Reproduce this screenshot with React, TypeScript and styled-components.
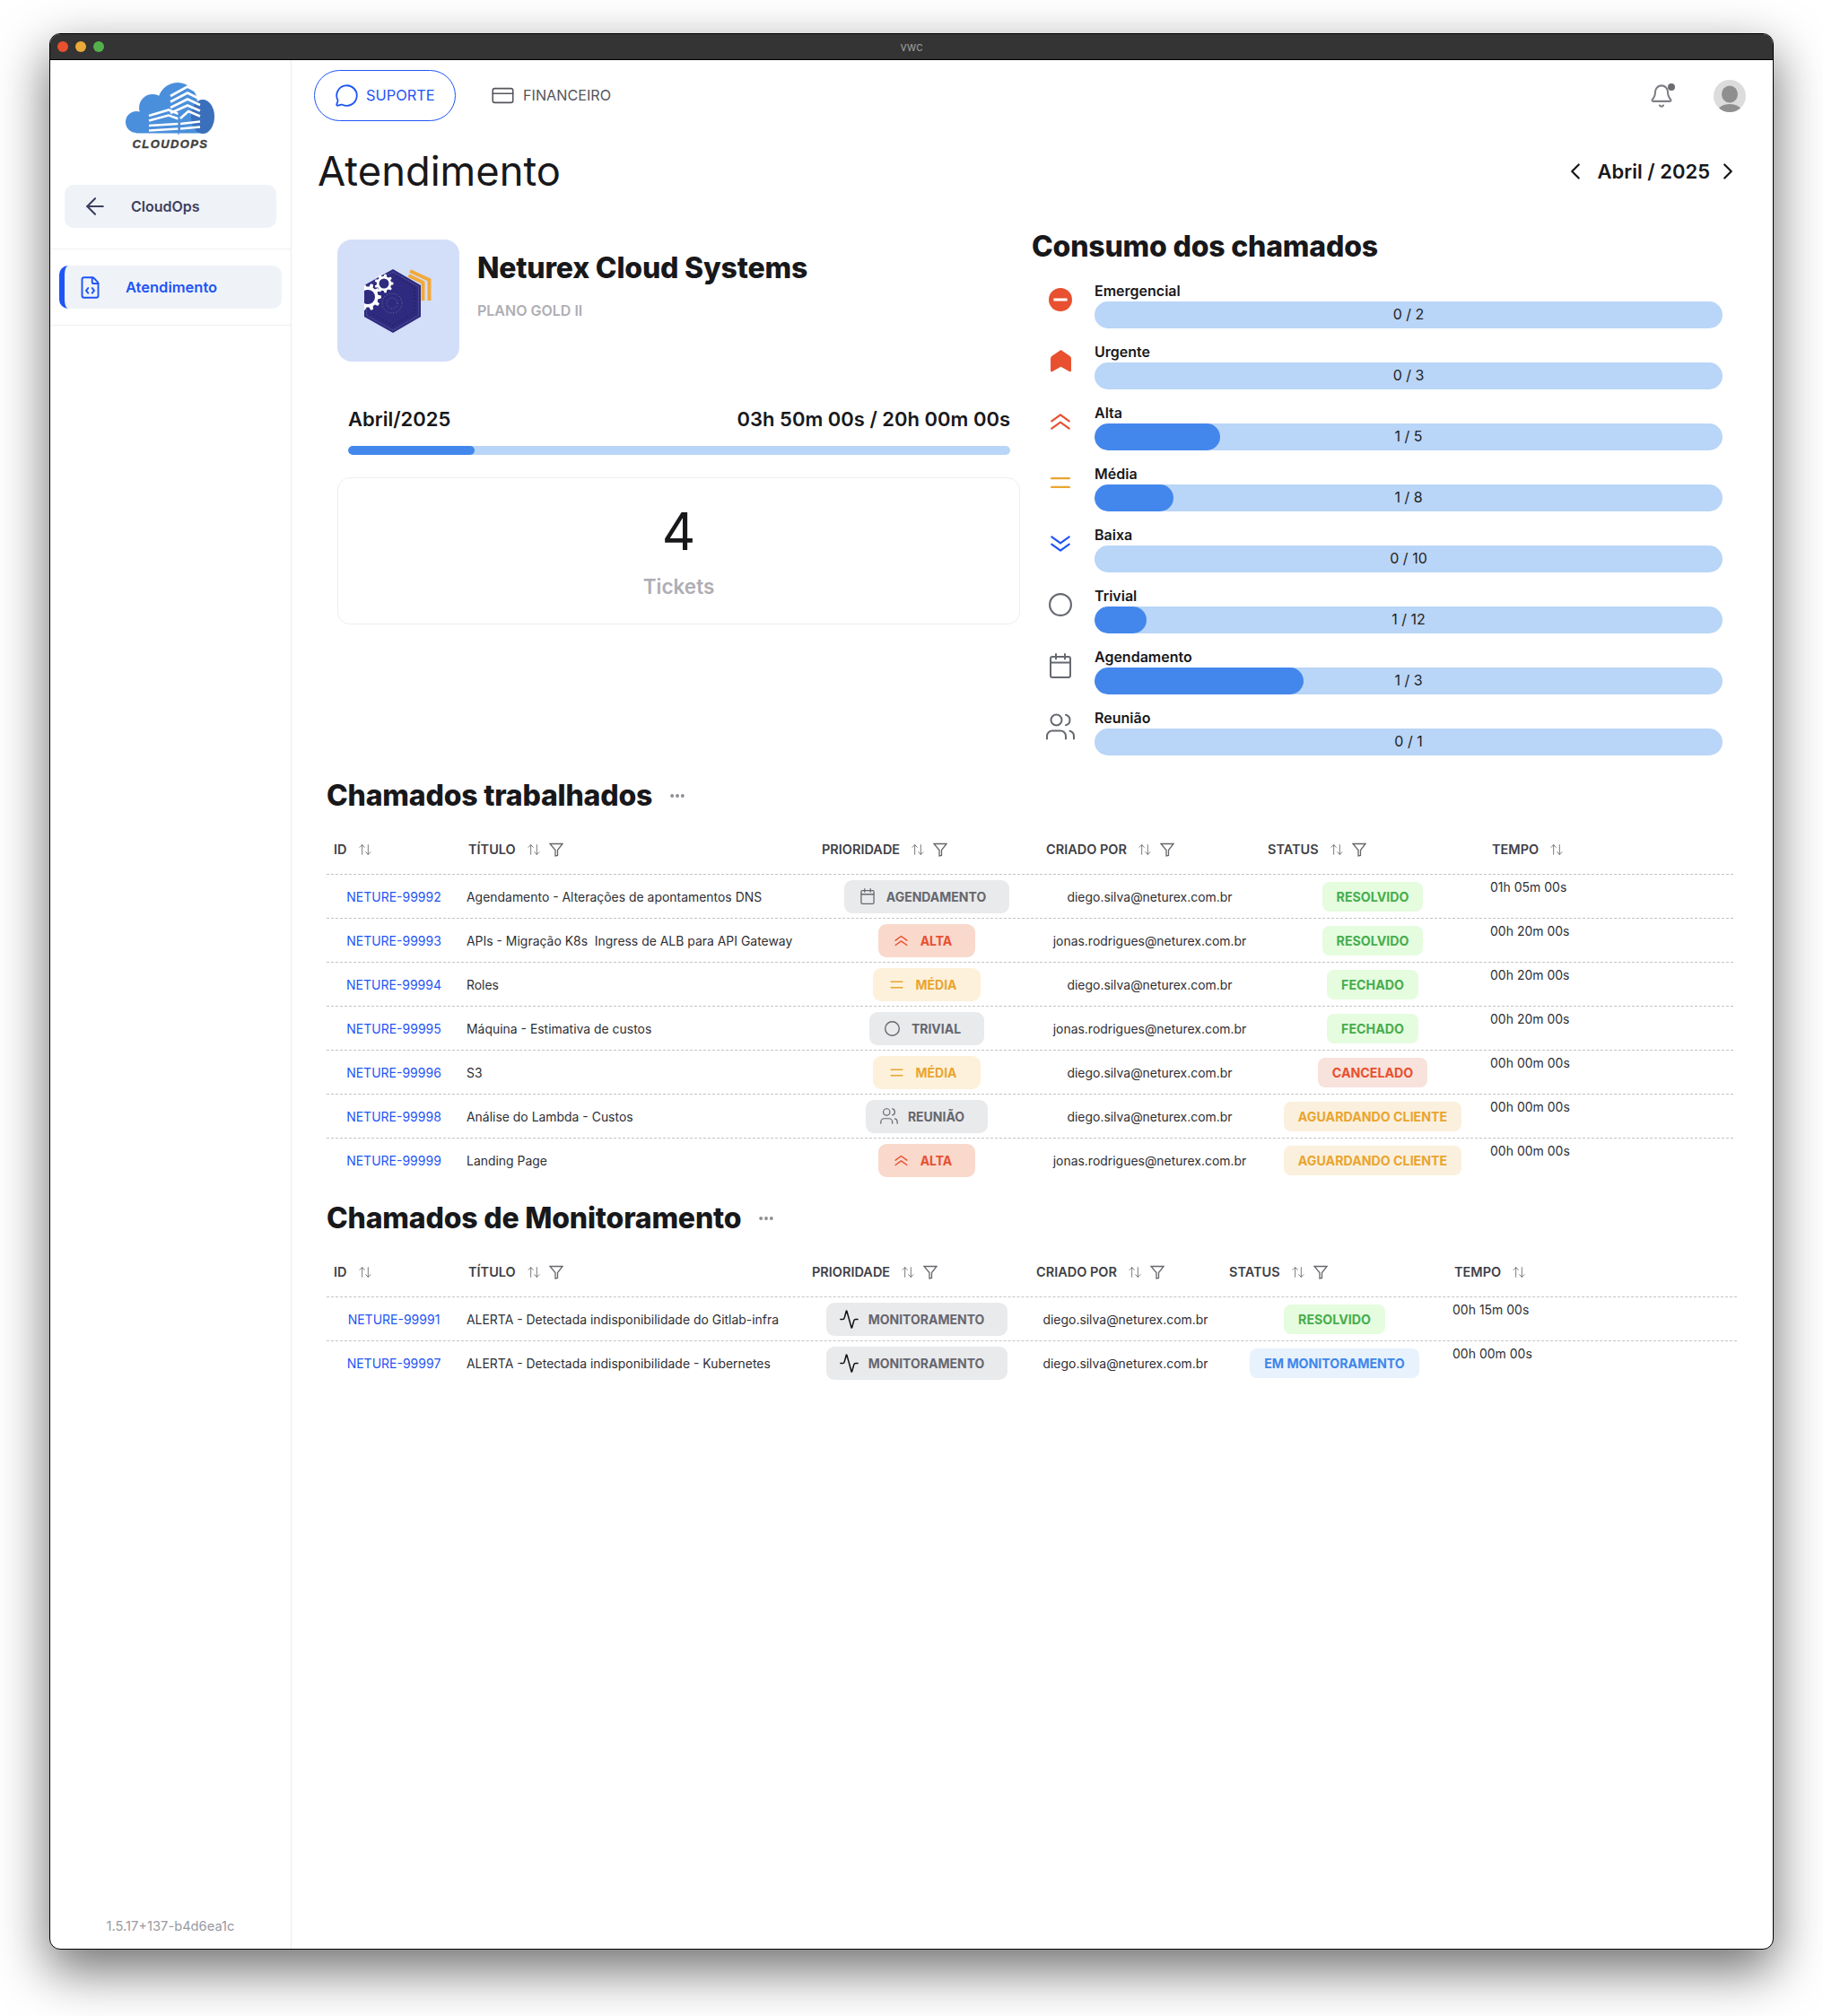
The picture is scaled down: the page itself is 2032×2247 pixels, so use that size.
import { FunctionComponent, ReactNode } from "react";
import styled, { createGlobalStyle } from "styled-components";
import {
  Activity,
  ArrowLeft,
  ArrowUpDown,
  Bell,
  ChevronLeft,
  ChevronRight,
  CreditCard,
  Ellipsis,
  FileCode,
  MessageCircle,
  Users,
} from "lucide-react";

const BLUE = "#1f55f5";
const RED = "#e8502f";
const AMBER = "#e9a52f";
const GREEN = "#47ad4d";

const GlobalStyle = createGlobalStyle`
  html, body {
    margin: 0;
    padding: 0;
    background: #fff;
  }
  body {
    width: 2032px;
    height: 2247px;
    overflow: hidden;
    font-family: Inter, "Liberation Sans", sans-serif;
    color: #18181b;
  }
  * {
    box-sizing: border-box;
  }
`;

const Frame = styled.div`
  width: 1922px;
  height: 2136px;
  margin: 37px 0 0 55px;
  border: 1px solid #000;
  border-radius: 12px;
  overflow: hidden;
  display: flex;
  flex-direction: column;
  background: #fff;
  box-shadow: 0 22px 56px 2px rgba(0, 0, 0, 0.55);
`;

const TitleBar = styled.div`
  height: 29px;
  flex: none;
  display: grid;
  grid-template-columns: 1fr auto 1fr;
  align-items: center;
  background: #343434;
  border-bottom: 1px solid #000;
  padding: 0 8px;
`;

const Lights = styled.div`
  display: flex;
  gap: 8px;
`;

const Light = styled.span<{ $color: string }>`
  width: 12px;
  height: 12px;
  border-radius: 50%;
  background: ${(p) => p.$color};
`;

const BarTitle = styled.span`
  font-size: 13px;
  color: #9a9a9a;
`;

const Body = styled.div`
  flex: 1;
  display: flex;
  min-height: 0;
`;

const Sidebar = styled.aside`
  width: 269px;
  flex: none;
  border-right: 1px solid #ececec;
  display: flex;
  flex-direction: column;
`;

const LogoBlock = styled.div`
  height: 139px;
  padding-top: 25px;
  display: flex;
  flex-direction: column;
  align-items: center;
`;

const LogoText = styled.span`
  font-family: "Liberation Sans", Arial, sans-serif;
  font-style: italic;
  font-weight: 700;
  font-size: 13px;
  line-height: 12px;
  letter-spacing: 1.4px;
  color: #3f3f3f;
  -webkit-text-stroke: 0.4px #3f3f3f;
  margin-top: 1px;
`;

const BackSection = styled.div`
  padding: 0 16px 23px;
  border-bottom: 1px solid #f0f0f0;
`;

const BackButton = styled.div`
  height: 48px;
  border-radius: 10px;
  background: #eff3f8;
  display: flex;
  align-items: center;
  padding-left: 19px;
  gap: 25px;
  font-size: 16px;
  font-weight: 600;
  color: #3f4060;
`;

const MenuSection = styled.nav`
  padding: 18px 10px 18px 10px;
  border-bottom: 1px solid #f0f0f0;
`;

const MenuItem = styled.div`
  height: 48px;
  border-radius: 10px;
  background: #eff3f8;
  border-left: 6px solid ${BLUE};
  display: flex;
  align-items: center;
  padding-left: 15px;
  gap: 26px;
  font-size: 16.5px;
  font-weight: 600;
  color: ${BLUE};
`;

const Version = styled.div`
  margin-top: auto;
  padding-bottom: 15px;
  text-align: center;
  font-size: 14.7px;
  line-height: 20px;
  color: #9a9aa0;
`;

const Main = styled.main`
  flex: 1;
  min-width: 0;
  display: flex;
  flex-direction: column;
`;

const TopNav = styled.div`
  display: flex;
  align-items: center;
  padding: 11px 30px 0 25px;
`;

const PillTab = styled.div`
  width: 158px;
  height: 57px;
  border: 1.5px solid ${BLUE};
  border-radius: 29px;
  display: flex;
  align-items: center;
  padding: 0 0 1px 22px;
  gap: 8px;
  font-size: 16.4px;
  color: ${BLUE};
`;

const PlainTab = styled.div`
  display: flex;
  align-items: center;
  gap: 9px;
  margin-left: 39px;
  padding-bottom: 1px;
  font-size: 16.2px;
  color: #55555c;
`;

const NavTools = styled.div`
  margin-left: auto;
  display: flex;
  align-items: center;
  gap: 44px;
`;

const BellWrap = styled.div`
  position: relative;
  display: flex;
  color: #7f7f87;
`;

const BellDot = styled.span`
  position: absolute;
  top: 0;
  right: -1px;
  width: 8px;
  height: 8px;
  border-radius: 50%;
  background: #6c6c72;
`;

const Avatar = styled.div`
  width: 36px;
  height: 36px;
  border-radius: 50%;
  overflow: hidden;
  background: #dcdcdc;
`;

const TitleRow = styled.div`
  display: flex;
  align-items: center;
  justify-content: space-between;
  padding: 28px 35.5px 0 29px;
`;

const PageTitle = styled.h1`
  margin: 0;
  font-size: 45.3px;
  line-height: 56px;
  font-weight: 400;
  color: #18181b;
`;

const MonthPicker = styled.div`
  display: flex;
  align-items: center;
  gap: 10px;
  font-size: 22px;
  line-height: 30px;
  font-weight: 600;
  color: #18181b;
`;

const NextMonth = styled(ChevronRight)`
  margin-left: -5.5px;
`;

const Overview = styled.section`
  display: flex;
  gap: 13px;
  margin: 36px 0 0 51px;
`;

const ClientColumn = styled.div`
  width: 761px;
  padding-top: 12px;
`;

const ClientRow = styled.div`
  display: flex;
  gap: 20px;
`;

const ClientLogo = styled.div`
  width: 136px;
  height: 136px;
  border-radius: 16px;
  background: #d3dff8;
  overflow: hidden;
`;

const ClientName = styled.h2`
  margin: 12px 0 0;
  font-size: 32px;
  line-height: 40px;
  font-weight: 800;
  letter-spacing: -0.2px;
`;

const ClientPlan = styled.div`
  margin-top: 17px;
  font-size: 16px;
  line-height: 20px;
  font-weight: 600;
  color: #aeaeb4;
`;

const PeriodRow = styled.div`
  display: flex;
  justify-content: space-between;
  margin: 49px 11px 0 12px;
  font-size: 22px;
  line-height: 30px;
  font-weight: 600;
`;

const HoursBar = styled.div`
  position: relative;
  height: 10px;
  margin: 15px 11px 0 12px;
  border-radius: 5px;
  background: #b9d5f7;
  overflow: hidden;
`;

const BarFill = styled.div`
  position: absolute;
  left: 0;
  top: 0;
  bottom: 0;
  border-radius: inherit;
  background: #4387ec;
`;

const TicketsCard = styled.div`
  height: 164px;
  margin-top: 25px;
  border: 1px solid #eeeeee;
  border-radius: 14px;
  display: flex;
  flex-direction: column;
  align-items: center;
  padding-top: 27px;
`;

const TicketsCount = styled.div`
  font-size: 58px;
  line-height: 64px;
  font-weight: 400;
`;

const TicketsLabel = styled.div`
  margin-top: 15px;
  font-size: 22.5px;
  line-height: 30px;
  font-weight: 600;
  color: #aeaeb4;
`;

const ConsumptionColumn = styled.div`
  width: 770px;
`;

const SectionTitle = styled.h2`
  margin: 0;
  font-size: 32px;
  line-height: 40px;
  font-weight: 800;
  letter-spacing: -0.2px;
`;

const QuotaList = styled.div`
  display: flex;
  flex-direction: column;
  gap: 17px;
  margin-top: 20px;
`;

const QuotaRow = styled.div`
  display: grid;
  grid-template-columns: 64px 6px 1fr;
`;

const QuotaIcon = styled.div`
  grid-column: 1;
  height: 38px;
  display: flex;
  align-items: center;
  justify-content: center;
`;

const QuotaBody = styled.div`
  grid-column: 3;
`;

const QuotaLabel = styled.div`
  font-size: 16px;
  line-height: 19px;
  height: 21px;
  font-weight: 600;
`;

const QuotaBar = styled.div`
  position: relative;
  height: 30px;
  border-radius: 15px;
  background: #b9d5f7;
  overflow: hidden;
  display: flex;
  align-items: center;
  justify-content: center;
  padding-bottom: 3px;
  font-size: 16px;
  color: #222;
`;

const QuotaValue = styled.span`
  position: relative;
`;

const TableTitleRow = styled.div<{ $top: number }>`
  display: flex;
  align-items: center;
  gap: 18px;
  margin: ${(p) => p.$top}px 0 0 39px;
`;

const MoreIcon = styled(Ellipsis)`
  color: #8a8a90;
`;

const TableWrap = styled.div<{ $width: number }>`
  width: ${(p) => p.$width}px;
  margin: 13px 0 0 39px;
`;

const GridRow = styled.div<{ $cols: string }>`
  display: grid;
  grid-template-columns: ${(p) => p.$cols};
  border-bottom: 1px dashed #c4c4c4;
  &:last-child {
    border-bottom: none;
  }
`;

const HeadRow = styled(GridRow)`
  height: 55px;
  padding-bottom: 1px;
  align-items: center;
`;

const BodyRow = styled(GridRow)`
  height: 49px;
  align-items: center;
  font-size: 13.95px;
  color: #2f2f35;
`;

const HeadCell = styled.div`
  display: flex;
  align-items: center;
  padding-left: 8px;
  font-size: 14.5px;
  font-weight: 600;
  color: #3f3f46;
`;

const SortIcon = styled(ArrowUpDown)`
  margin-left: 12px;
  color: #66666c;
`;

const FilterIcon = styled.svg`
  margin-left: 9px;
  width: 16px;
  height: 16px;
  fill: none;
  stroke: #66666c;
  stroke-width: 1.3;
`;

const IdCell = styled.a`
  text-align: center;
  font-size: 14px;
  color: ${BLUE};
`;

const TitleCell = styled.div`
  padding-left: 6px;
  white-space: pre;
`;

const CenterCell = styled.div`
  display: flex;
  justify-content: center;
`;

const TimeCell = styled.div`
  align-self: start;
  padding: 4px 0 0 6px;
  font-size: 14px;
  line-height: 20px;
`;

const toneColors = {
  grey: { bg: "#e9eaec", fg: "#66666d" },
  red: { bg: "#f8d9cc", fg: RED },
  amber: { bg: "#fdf1dc", fg: AMBER },
  green: { bg: "#e5fcdf", fg: GREEN },
  rose: { bg: "#f8e2dc", fg: RED },
  sand: { bg: "#fbf0dd", fg: AMBER },
  sky: { bg: "#e8f2fd", fg: "#3f86ea" },
};
type Tone = keyof typeof toneColors;

const PriorityBadge = styled.div<{ $tone: Tone }>`
  height: 37px;
  border-radius: 9px;
  display: flex;
  align-items: center;
  gap: 9px;
  padding: 0 26px 0 14px;
  font-size: 14px;
  font-weight: 700;
  background: ${(p) => toneColors[p.$tone].bg};
  color: ${(p) => toneColors[p.$tone].fg};
`;

const BadgeIcon = styled.span`
  width: 24px;
  display: flex;
  justify-content: center;
`;

const StatusBadge = styled.div<{ $tone: Tone }>`
  height: 33px;
  border-radius: 8px;
  display: flex;
  align-items: center;
  padding: 0 16px;
  font-size: 14.2px;
  font-weight: 700;
  background: ${(p) => toneColors[p.$tone].bg};
  color: ${(p) => toneColors[p.$tone].fg};
`;

type Priority =
  | "Emergencial"
  | "Urgente"
  | "Alta"
  | "Média"
  | "Baixa"
  | "Trivial"
  | "Agendamento"
  | "Reunião"
  | "Monitoramento";

const GREY_ICON = "#666970";

const PriorityIcon: FunctionComponent<{ kind: Priority; size: number }> = ({ kind, size }) => {
  const line = { fill: "none", strokeLinecap: "round", strokeLinejoin: "round" } as const;
  switch (kind) {
    case "Emergencial":
      return (
        <svg width={size} height={size} viewBox="0 0 24 24">
          <circle cx="12" cy="12" r="12" fill={RED} />
          <rect x="5" y="10.6" width="14" height="2.8" fill="#fff" />
        </svg>
      );
    case "Urgente":
      return (
        <svg width={size} height={size} viewBox="0 0 24 24">
          <path d="M12 0 L21.5 6.5 Q23 7.6 23 9 V22 Q23 24 21 23 L12 18 L3 23 Q1 24 1 22 V9 Q1 7.6 2.5 6.5 Z" fill={RED} />
        </svg>
      );
    case "Alta":
      return (
        <svg width={size} height={size} viewBox="0 0 24 24" {...line} stroke={RED} strokeWidth="2">
          <path d="M3 11.5 L12 5 L21 11.5" />
          <path d="M3 19 L12 12.5 L21 19" />
        </svg>
      );
    case "Média":
      return (
        <svg width={size} height={size} viewBox="0 0 24 24" {...line} stroke={AMBER} strokeWidth="2.2">
          <path d="M3 7.5 H21" />
          <path d="M3 16.5 H21" />
        </svg>
      );
    case "Baixa":
      return (
        <svg width={size} height={size} viewBox="0 0 24 24" {...line} stroke={BLUE} strokeWidth="2">
          <path d="M3 5 L12 11.5 L21 5" />
          <path d="M3 12.5 L12 19 L21 12.5" />
        </svg>
      );
    case "Trivial":
      return (
        <svg width={size} height={size} viewBox="0 0 24 24" {...line} stroke={GREY_ICON} strokeWidth="2">
          <circle cx="12" cy="12" r="11" />
        </svg>
      );
    case "Agendamento":
      return (
        <svg width={size} height={size} viewBox="0 0 24 28" {...line} stroke={GREY_ICON} strokeWidth="2">
          <rect x="1" y="4" width="22" height="23" rx="2" />
          <path d="M1 10.5 H23" />
          <path d="M7 1 V6.5" />
          <path d="M17 1 V6.5" />
        </svg>
      );
    case "Reunião":
      return <Users size={size} strokeWidth={1.35} color={GREY_ICON} />;
    default:
      return <Activity size={size} strokeWidth={1.6} color="#111" />;
  }
};

const LogoMark: FunctionComponent = () => (
  <svg width="102" height="62" viewBox="19 24 102 62">
    <circle cx="32" cy="68" r="12" fill="#4a8fdb" />
    <circle cx="50" cy="52" r="15" fill="#4a8fdb" />
    <circle cx="78" cy="46" r="22" fill="#4a8fdb" />
    <rect x="32" y="60" width="70" height="20.5" fill="#4a8fdb" />
    <ellipse cx="106" cy="62" rx="13" ry="19" fill="#3a6fbb" />
    <g fill="none" stroke="#fff" strokeWidth="2.6">
      <path d="M70 39 L89 28.5 L102 35.5" />
      <path d="M70 45.5 L89 35.5 L103 42.5" />
      <path d="M70 52 L89 42.5 L103 49" />
      <path d="M70 58 L89 49.5 L103 55.5" />
      <path d="M81 64 L90 56 L103 61.5" />
      <path d="M81 70 L103 67.5" />
      <path d="M81 75.5 L103 73.5" />
      <path d="M46 61 L68 54.5 L79 59" />
      <path d="M46 66.5 L68 60.5 L79 64.5" />
      <path d="M46 72 L79 70" />
      <path d="M46 77.5 L79 75.5" />
    </g>
    <path d="M79 56 V82" stroke="#4a8fdb" strokeWidth="1.2" />
  </svg>
);

// gear outline with square teeth around the centre
const gearPath = (r: number, teeth: number) => {
  const inner = r * 0.78;
  const step = (Math.PI * 2) / teeth;
  const points: string[] = [];
  for (let i = 0; i < teeth; i++) {
    const a = i * step;
    [
      [inner, a - step * 0.3],
      [r, a - step * 0.16],
      [r, a + step * 0.16],
      [inner, a + step * 0.3],
    ].forEach(([d, t]) => points.push(`${(d * Math.cos(t)).toFixed(2)} ${(d * Math.sin(t)).toFixed(2)}`));
  }
  return `M${points.join(" L")} Z`;
};

const Gear: FunctionComponent<{ x: number; y: number; r: number; teeth: number; hole: number }> = ({ x, y, r, teeth, hole }) => (
  <g transform={`translate(${x} ${y})`}>
    <path d={gearPath(r, teeth)} fill="#fff" />
    <circle r={hole} fill="#2e2a7f" />
  </g>
);

const ClientMark: FunctionComponent = () => (
  <svg width="136" height="136" viewBox="6 7 136 136">
    <defs>
      <clipPath id="hex">
        <path d="M68 40 L99 58 V93 L68 111 L36 93 V58 Z" />
      </clipPath>
    </defs>
    <path d="M68 40 L99 58 V93 L68 111 L36 93 V58 Z" fill="#2e2a7f" />
    <path d="M68 43 L96.5 59.5 V91.5 L68 108 L38.5 91.5 V59.5 Z" fill="none" stroke="#8f8fb8" strokeWidth="0.6" strokeDasharray="1 1" />
    <path d="M72 48 L92 60 V88 L68 103 L44 89" fill="none" stroke="#12123c" strokeWidth="1" strokeDasharray="1 3" />
    <g clipPath="url(#hex)">
      <Gear x={40} y={71} r={15} teeth={10} hole={8} />
    </g>
    <Gear x={58} y={56} r={10.5} teeth={9} hole={5.5} />
    <circle cx="67" cy="78" r="11" fill="none" stroke="#8b8aa8" strokeWidth="0.8" strokeDasharray="1 2" />
    <circle cx="67" cy="78" r="6" fill="none" stroke="#8b8aa8" strokeWidth="0.8" strokeDasharray="1 2" />
    <path d="M87 42 L108.5 52 V75" fill="none" stroke="#f2a93a" strokeWidth="4" />
    <path d="M85.5 47 L101.5 55 V75" fill="none" stroke="#f2a93a" strokeWidth="4" />
  </svg>
);

const Filter: FunctionComponent = () => (
  <FilterIcon viewBox="0 0 16 16">
    <path d="M1 1.5 H15 L9.5 8.5 V14.5 L7 15 V8.5 Z" />
  </FilterIcon>
);

const HeadLabel: FunctionComponent<{ label: string; filter?: boolean }> = ({ label, filter = true }) => (
  <HeadCell>
    {label}
    <SortIcon size={16} strokeWidth={1.3} />
    {filter && <Filter />}
  </HeadCell>
);

const TableHead: FunctionComponent<{ cols: string }> = ({ cols }) => (
  <HeadRow $cols={cols}>
    <HeadLabel label="ID" filter={false} />
    <HeadLabel label="TÍTULO" />
    <HeadLabel label="PRIORIDADE" />
    <HeadLabel label="CRIADO POR" />
    <HeadLabel label="STATUS" />
    <HeadLabel label="TEMPO" filter={false} />
  </HeadRow>
);

const priorityTone: Record<Priority, Tone> = {
  Emergencial: "red",
  Urgente: "red",
  Alta: "red",
  Média: "amber",
  Baixa: "sky",
  Trivial: "grey",
  Agendamento: "grey",
  Reunião: "grey",
  Monitoramento: "grey",
};

const statusTone: Record<string, Tone> = {
  RESOLVIDO: "green",
  FECHADO: "green",
  CANCELADO: "rose",
  "AGUARDANDO CLIENTE": "sand",
  "EM MONITORAMENTO": "sky",
};

type Ticket = {
  id: string;
  title: string;
  priority: Priority;
  author: string;
  status: string;
  time: string;
};

const DIEGO = "diego.silva@neturex.com.br";
const JONAS = "jonas.rodrigues@neturex.com.br";

const workedTickets: Ticket[] = [
  { id: "NETURE-99992", title: "Agendamento - Alterações de apontamentos DNS", priority: "Agendamento", author: DIEGO, status: "RESOLVIDO", time: "01h 05m 00s" },
  { id: "NETURE-99993", title: "APIs - Migração K8s  Ingress de ALB para API Gateway", priority: "Alta", author: JONAS, status: "RESOLVIDO", time: "00h 20m 00s" },
  { id: "NETURE-99994", title: "Roles", priority: "Média", author: DIEGO, status: "FECHADO", time: "00h 20m 00s" },
  { id: "NETURE-99995", title: "Máquina - Estimativa de custos", priority: "Trivial", author: JONAS, status: "FECHADO", time: "00h 20m 00s" },
  { id: "NETURE-99996", title: "S3", priority: "Média", author: DIEGO, status: "CANCELADO", time: "00h 00m 00s" },
  { id: "NETURE-99998", title: "Análise do Lambda - Custos", priority: "Reunião", author: DIEGO, status: "AGUARDANDO CLIENTE", time: "00h 00m 00s" },
  { id: "NETURE-99999", title: "Landing Page", priority: "Alta", author: JONAS, status: "AGUARDANDO CLIENTE", time: "00h 00m 00s" },
];

const monitorTickets: Ticket[] = [
  { id: "NETURE-99991", title: "ALERTA - Detectada indisponibilidade do Gitlab-infra", priority: "Monitoramento", author: DIEGO, status: "RESOLVIDO", time: "00h 15m 00s" },
  { id: "NETURE-99997", title: "ALERTA - Detectada indisponibilidade - Kubernetes", priority: "Monitoramento", author: DIEGO, status: "EM MONITORAMENTO", time: "00h 00m 00s" },
];

const quotas: { kind: Priority; used: number; total: number; iconSize: number }[] = [
  { kind: "Emergencial", used: 0, total: 2, iconSize: 26 },
  { kind: "Urgente", used: 0, total: 3, iconSize: 25 },
  { kind: "Alta", used: 1, total: 5, iconSize: 26 },
  { kind: "Média", used: 1, total: 8, iconSize: 26 },
  { kind: "Baixa", used: 0, total: 10, iconSize: 26 },
  { kind: "Trivial", used: 1, total: 12, iconSize: 26 },
  { kind: "Agendamento", used: 1, total: 3, iconSize: 28 },
  { kind: "Reunião", used: 0, total: 1, iconSize: 36 },
];

const badgeIconSize: Partial<Record<Priority, number>> = {
  Agendamento: 18,
  Reunião: 22,
  Trivial: 17,
  Monitoramento: 23,
};

const TicketTable: FunctionComponent<{ cols: string; width: number; tickets: Ticket[] }> = ({ cols, width, tickets }) => (
  <TableWrap $width={width}>
    <TableHead cols={cols} />
    {tickets.map((t) => (
      <BodyRow key={t.id} $cols={cols}>
        <IdCell>{t.id}</IdCell>
        <TitleCell>{t.title}</TitleCell>
        <CenterCell>
          <PriorityBadge $tone={priorityTone[t.priority]}>
            <BadgeIcon>
              <PriorityIcon kind={t.priority} size={badgeIconSize[t.priority] ?? 17} />
            </BadgeIcon>
            {t.priority.toUpperCase()}
          </PriorityBadge>
        </CenterCell>
        <CenterCell>{t.author}</CenterCell>
        <CenterCell>
          <StatusBadge $tone={statusTone[t.status]}>{t.status}</StatusBadge>
        </CenterCell>
        <TimeCell>{t.time}</TimeCell>
      </BodyRow>
    ))}
  </TableWrap>
);

const TableHeading: FunctionComponent<{ top: number; children: ReactNode }> = ({ top, children }) => (
  <TableTitleRow $top={top}>
    <SectionTitle>{children}</SectionTitle>
    <MoreIcon size={20} strokeWidth={2.6} />
  </TableTitleRow>
);

const App: FunctionComponent = () => (
  <>
    <GlobalStyle />
    <Frame>
      <TitleBar>
        <Lights>
          <Light $color="#e8502f" />
          <Light $color="#eaa938" />
          <Light $color="#54b04a" />
        </Lights>
        <BarTitle>vwc</BarTitle>
      </TitleBar>
      <Body>
        <Sidebar>
          <LogoBlock>
            <LogoMark />
            <LogoText>CLOUDOPS</LogoText>
          </LogoBlock>
          <BackSection>
            <BackButton>
              <ArrowLeft size={30} strokeWidth={1.7} />
              CloudOps
            </BackButton>
          </BackSection>
          <MenuSection>
            <MenuItem>
              <FileCode size={27} strokeWidth={1.7} />
              Atendimento
            </MenuItem>
          </MenuSection>
          <Version>1.5.17+137-b4d6ea1c</Version>
        </Sidebar>
        <Main>
          <TopNav>
            <PillTab>
              <MessageCircle size={27} strokeWidth={1.6} />
              SUPORTE
            </PillTab>
            <PlainTab>
              <CreditCard size={27} strokeWidth={1.4} />
              FINANCEIRO
            </PlainTab>
            <NavTools>
              <BellWrap>
                <Bell size={28} strokeWidth={1.8} />
                <BellDot />
              </BellWrap>
              <Avatar>
                <svg width="36" height="36" viewBox="0 0 36 36">
                  <ellipse cx="18" cy="16" rx="9" ry="9.5" fill="#8f8f8f" />
                  <ellipse cx="18" cy="38" rx="15" ry="11" fill="#8f8f8f" />
                </svg>
              </Avatar>
            </NavTools>
          </TopNav>
          <TitleRow>
            <PageTitle>Atendimento</PageTitle>
            <MonthPicker>
              <ChevronLeft size={30} strokeWidth={1.8} />
              Abril / 2025
              <NextMonth size={30} strokeWidth={1.8} />
            </MonthPicker>
          </TitleRow>
          <Overview>
            <ClientColumn>
              <ClientRow>
                <ClientLogo>
                  <ClientMark />
                </ClientLogo>
                <div>
                  <ClientName>Neturex Cloud Systems</ClientName>
                  <ClientPlan>PLANO GOLD II</ClientPlan>
                </div>
              </ClientRow>
              <PeriodRow>
                <span>Abril/2025</span>
                <span>03h 50m 00s / 20h 00m 00s</span>
              </PeriodRow>
              <HoursBar>
                <BarFill style={{ width: `${(230 / 1200) * 100}%` }} />
              </HoursBar>
              <TicketsCard>
                <TicketsCount>4</TicketsCount>
                <TicketsLabel>Tickets</TicketsLabel>
              </TicketsCard>
            </ClientColumn>
            <ConsumptionColumn>
              <SectionTitle>Consumo dos chamados</SectionTitle>
              <QuotaList>
                {quotas.map((q) => (
                  <QuotaRow key={q.kind}>
                    <QuotaIcon>
                      <PriorityIcon kind={q.kind} size={q.iconSize} />
                    </QuotaIcon>
                    <QuotaBody>
                      <QuotaLabel>{q.kind}</QuotaLabel>
                      <QuotaBar>
                        {q.used > 0 && <BarFill style={{ width: `${(q.used / q.total) * 100}%` }} />}
                        <QuotaValue>
                          {q.used} / {q.total}
                        </QuotaValue>
                      </QuotaBar>
                    </QuotaBody>
                  </QuotaRow>
                ))}
              </QuotaList>
            </ConsumptionColumn>
          </Overview>
          <TableHeading top={25}>Chamados trabalhados</TableHeading>
          <TicketTable cols="150px 394px 250px 247px 250px 277px" width={1568} tickets={workedTickets} />
          <TableHeading top={20}>Chamados de Monitoramento</TableHeading>
          <TicketTable cols="150px 383px 250px 215px 251px 323px" width={1572} tickets={monitorTickets} />
        </Main>
      </Body>
    </Frame>
  </>
);

export default App;
